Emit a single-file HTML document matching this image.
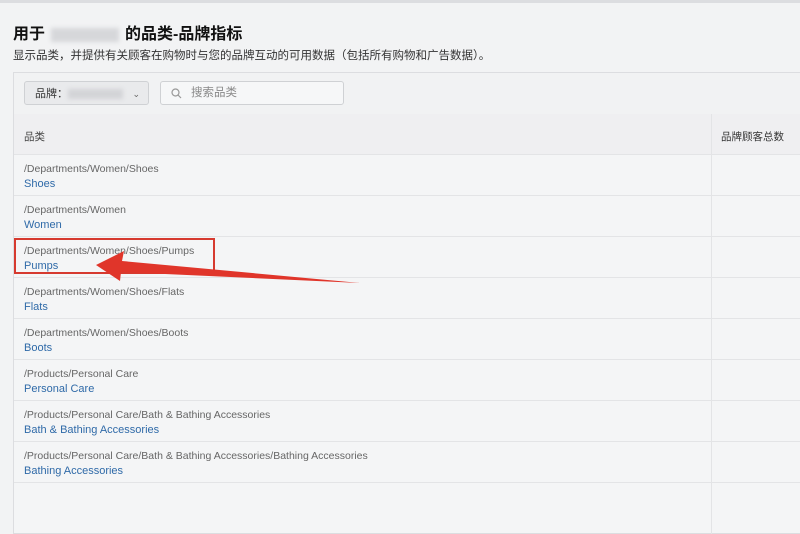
<!DOCTYPE html>
<html><head><meta charset="utf-8"><style>
body{margin:0;width:800px;height:474px;overflow:hidden;background:#f2f3f4;font-family:"Liberation Sans","Noto Sans CJK SC",sans-serif;position:relative}
.top{position:absolute;left:0;top:0;width:800px;height:3px;background:#dcdde0}
h1{position:absolute;left:13px;top:20px;margin:0;font-size:16px;font-weight:bold;color:#111}
.blur{display:inline-block;width:68px;height:14px;background:#d6d7da;filter:blur(2px);vertical-align:middle;margin:0 6px}
.desc{position:absolute;left:13px;top:47px;font-size:11.5px;color:#333}
.panel{position:absolute;left:13px;top:72px;width:800px;height:460px;border:1px solid #dcdde0;background:#f4f5f6}
.tool{height:41px;border-bottom:1px solid #e2e3e5;background:#f1f2f3}
.sel{position:absolute;left:10px;top:8px;width:125px;height:24px;border:1px solid #cfd1d4;border-radius:3px;background:#e9eaec;font-size:11px;color:#333;line-height:24px;padding-left:10px;box-sizing:border-box}
.sel .b{display:inline-block;width:55px;height:10px;background:#d3d4d7;filter:blur(2px);vertical-align:middle}
.sel .c{position:absolute;right:8px;top:0;font-size:9px;color:#666}
.srch{position:absolute;left:146px;top:8px;width:184px;height:24px;border:1px solid #cfd1d4;border-radius:3px;background:#f6f7f8;box-sizing:border-box;font-size:11.5px;color:#888;line-height:22px;padding-left:30px}
.row{position:absolute;left:0;width:800px;height:40px;border-bottom:1px solid #e3e4e6}
.row .p{position:absolute;left:10px;top:8px;font-size:10.5px;color:#666}
.row .n{position:absolute;left:10px;top:23px;font-size:11px;color:#2f6aa8}
.vl{position:absolute;left:697px;top:41px;width:1px;height:420px;background:#e3e4e6}
</style></head><body>
<div class="top"></div>
<h1>用于<span class="blur"></span>的品类-品牌指标</h1>
<div class="desc">显示品类，并提供有关顾客在购物时与您的品牌互动的可用数据（包括所有购物和广告数据）。</div>
<div class="panel">
<div class="tool"></div>
<div class="sel">品牌：<span class="b"></span><span class="c">⌄</span></div>
<div class="srch"><svg style="position:absolute;left:10px;top:6px" width="11" height="11" viewBox="0 0 11 11"><circle cx="4.5" cy="4.5" r="3.5" fill="none" stroke="#999" stroke-width="1.2"/><path d="M7 7l3 3" stroke="#999" stroke-width="1.2"/></svg>搜索品类</div>
<div class="row" style="top:41px;background:#efeff1"><span class="p" style="top:15px;font-size:10.5px;color:#444">品类</span><span style="position:absolute;left:707px;top:15px;font-size:10.5px;color:#333">品牌顾客总数</span></div>
<div class="row" style="top:82px"><span class="p">/Departments/Women/Shoes</span><span class="n">Shoes</span></div>
<div class="row" style="top:123px"><span class="p">/Departments/Women</span><span class="n">Women</span></div>
<div class="row" style="top:164px"><span class="p">/Departments/Women/Shoes/Pumps</span><span class="n">Pumps</span></div>
<div class="row" style="top:205px"><span class="p">/Departments/Women/Shoes/Flats</span><span class="n">Flats</span></div>
<div class="row" style="top:246px"><span class="p">/Departments/Women/Shoes/Boots</span><span class="n">Boots</span></div>
<div class="row" style="top:287px"><span class="p">/Products/Personal Care</span><span class="n">Personal Care</span></div>
<div class="row" style="top:328px"><span class="p">/Products/Personal Care/Bath &amp; Bathing Accessories</span><span class="n">Bath &amp; Bathing Accessories</span></div>
<div class="row" style="top:369px"><span class="p">/Products/Personal Care/Bath &amp; Bathing Accessories/Bathing Accessories</span><span class="n">Bathing Accessories</span></div>
<div class="vl"></div>
</div>
<div style="position:absolute;left:14px;top:238px;width:201px;height:36px;border:2px solid #d63a2f;box-sizing:border-box"></div>
<svg style="position:absolute;left:0;top:0" width="800" height="474"><path d="M96 265 L124 251 L122 261 L360 283 L121 272 L120 281 Z" fill="#e0352a"/></svg>
</body></html>
